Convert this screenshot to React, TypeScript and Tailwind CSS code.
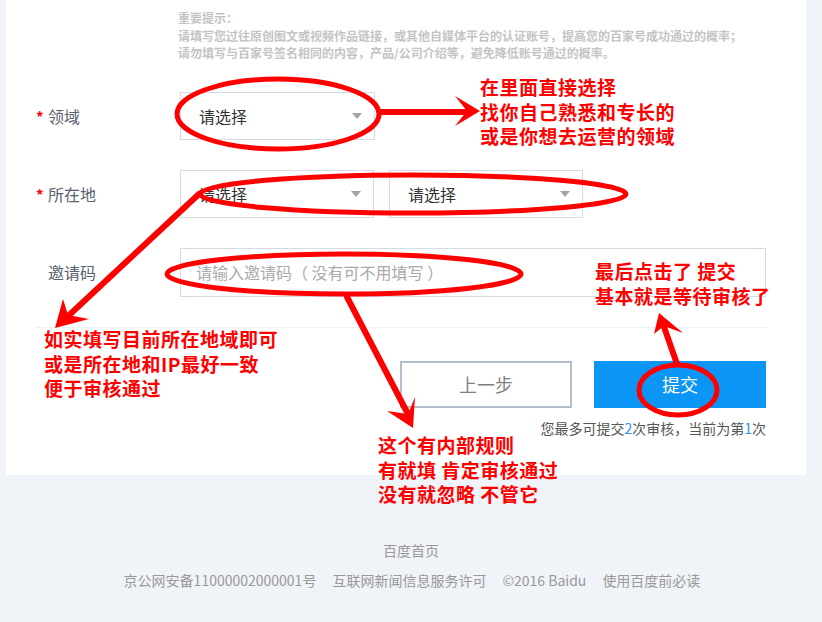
import React from "react";

const cjk = "font-['Microsoft_YaHei','Noto_Sans_CJK_SC',sans-serif]";

function Caret() {
  return (
    <span className="ml-auto h-0 w-0 border-x-[5px] border-t-[6px] border-x-transparent border-t-[#a3a3a3]" />
  );
}

function Select({ w }: { w: string }) {
  return (
    <div className={`flex h-[48px] ${w} items-center border border-[#d5dce8] pl-[18px] pr-[12px] text-[16px] text-[#333]`}>
      请选择
      <Caret />
    </div>
  );
}

function Label({ text, required }: { text: string; required?: boolean }) {
  return (
    <div className="flex w-[144px] shrink-0 items-center text-[16px] text-[#5a6270]">
      <span className="w-[12px] pt-[4px] text-[15px] font-bold text-[#f00]">{required ? "*" : ""}</span>
      {text}
    </div>
  );
}

const red = "absolute whitespace-nowrap text-[19px] font-bold leading-[24.5px] tracking-[0.5px] text-[#f00]";

export default function App() {
  return (
    <div className={`relative min-h-[622px] w-[822px] overflow-hidden bg-[#f0f3f8] ${cjk}`}>
      {/* 表单卡片 */}
      <div className="ml-[6px] w-[800px] bg-white pb-[37px] pl-[30px] pr-[40px] pt-[9px]">
        <div className="ml-[142px] text-[12px] font-bold leading-[17.5px] text-[#c4c4c4]">
          <div>重要提示：</div>
          <div>请填写您过往原创图文或视频作品链接，或其他自媒体平台的认证账号，提高您的百家号成功通过的概率；</div>
          <div>请勿填写与百家号签名相同的内容，产品/公司介绍等，避免降低账号通过的概率。</div>
        </div>

        <div className="mt-[30px] flex items-center">
          <Label text="领域" required />
          <Select w="w-[195px]" />
        </div>

        <div className="mt-[30px] flex items-center">
          <Label text="所在地" required />
          <div className="flex gap-[15px]">
            <Select w="w-[194px]" />
            <Select w="w-[194px]" />
          </div>
        </div>

        <div className="mt-[30px] flex items-center">
          <Label text="邀请码" />
          <div className="flex h-[49px] flex-1 items-center border border-[#d5dce8] pl-[15px] text-[16px] text-[#aaa]">
            请输入邀请码（ 没有可不用填写 ）
          </div>
        </div>

        <div className="mt-[30px] h-px bg-[#edf0f5]" />

        <div className="mt-[33px] flex justify-end gap-[22px]">
          <div className="flex h-[47px] w-[172px] items-center justify-center border-2 border-[#b2bdce] text-[18px] text-[#808080]">
            上一步
          </div>
          <div className="flex h-[47px] w-[172px] items-center justify-center bg-[#0b95f5] text-[18px] text-white">
            提交
          </div>
        </div>

        <div className="mt-[10px] text-right text-[14px] leading-[20px] text-[#555]">
          您最多可提交<span className="text-[#2a8ff7]">2</span>次审核，当前为第<span className="text-[#2a8ff7]">1</span>次
        </div>
      </div>

      {/* 页脚 */}
      <div className="mt-[65px] text-center text-[14px] leading-[20px] text-[#999]">
        <div>百度首页</div>
        <div className="mt-[10px] flex justify-center gap-[16px] pl-[2px]">
          <span>京公网安备11000002000001号</span>
          <span>互联网新闻信息服务许可</span>
          <span>©2016 Baidu</span>
          <span>使用百度前必读</span>
        </div>
      </div>

      {/* 标注 */}
      <svg className="pointer-events-none absolute left-0 top-0" width="822" height="622" viewBox="0 0 822 622">
        <g fill="none" stroke="#f00" strokeWidth="5">
          <ellipse cx="278" cy="114" rx="101" ry="35" />
          <ellipse cx="413" cy="194" rx="213" ry="19" />
          <ellipse cx="344" cy="274" rx="177" ry="20" />
          <ellipse cx="678" cy="390" rx="39" ry="25" />
        </g>
        <g stroke="#f00" strokeWidth="6" strokeLinecap="round">
          <line x1="382" y1="112" x2="468" y2="112" />
          <line x1="199" y1="194" x2="66" y2="318" />
          <line x1="347" y1="297" x2="409" y2="416" />
          <line x1="677" y1="364" x2="663" y2="324" />
        </g>
        <g fill="#f00">
          <polygon points="480,111 455,96 467,111 455,126" />
          <polygon points="55,328 63,299 68,315 89,319" />
          <polygon points="413,428 387,411 408,414 415,397" />
          <polygon points="659,313 654,334 664,326 683,333" />
        </g>
      </svg>

      <div className={`${red} left-[480px] top-[75px]`}>
        <div>在里面直接选择</div>
        <div>找你自己熟悉和专长的</div>
        <div>或是你想去运营的领域</div>
      </div>
      <div className={`${red} left-[44px] top-[327px]`}>
        <div>如实填写目前所在地域即可</div>
        <div>或是所在地和IP最好一致</div>
        <div>便于审核通过</div>
      </div>
      <div className={`${red} left-[378px] top-[433px]`}>
        <div>这个有内部规则</div>
        <div>有就填 肯定审核通过</div>
        <div>没有就忽略 不管它</div>
      </div>
      <div className={`${red} left-[595px] top-[259px]`}>
        <div>最后点击了 提交</div>
        <div>基本就是等待审核了</div>
      </div>
    </div>
  );
}
